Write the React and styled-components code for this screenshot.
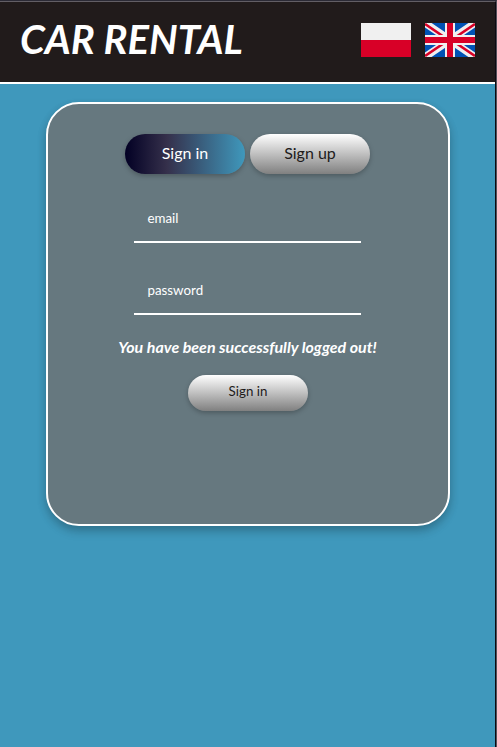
import React from "react";
import styled, { createGlobalStyle } from "styled-components";

const GlobalStyle = createGlobalStyle`
  *, *::before, *::after { box-sizing: border-box; }
  body { margin: 0; background: #3f98bc; font-family: Lato, sans-serif; }
  button, input { font-family: inherit; }
`;

const Page = styled.div`
  display: flex;
  flex-direction: column;
  width: 497px;
  height: 747px;
  overflow: hidden;
  background: #3f98bc;
  border-top: 1px solid #2b2a35;
  border-right: 1px solid #55505a;
`;

const Frame = styled.div`
  flex: 1;
  border-top: 1px solid #625e65;
  border-right: 1px solid #0c0a12;
`;

const Header = styled.header`
  display: flex;
  align-items: center;
  justify-content: space-between;
  height: 82px;
  padding: 0 20px 4px;
  background: #211b1b;
  border-bottom: 2px solid #fff;
`;

const Title = styled.h1`
  margin: 0 0 2px;
  color: #fff;
  font-size: 40px;
  line-height: 48px;
  font-style: italic;
  font-weight: 700;
  white-space: nowrap;
`;

const Flags = styled.div`
  display: flex;
  gap: 14px;
`;

const Flag = styled.svg`
  display: block;
  width: 50px;
  height: 34px;
`;

const Card = styled.main`
  display: flex;
  flex-direction: column;
  align-items: center;
  width: 404px;
  height: 424px;
  margin: 18px 0 0 46px;
  padding-top: 30px;
  background: #66787f;
  border: 2px solid #fff;
  border-radius: 33px;
  box-shadow: 0 4px 8px rgba(0, 0, 0, 0.2), 0 6px 12px rgba(0, 0, 0, 0.08);
`;

const Tabs = styled.div`
  display: flex;
  gap: 5px;
  margin-right: 1px;
`;

const PillButton = styled.button`
  width: 120px;
  height: ${(p) => (p.$small ? 36 : 40)}px;
  padding: ${(p) => (p.$small ? "0 1px 5px" : "0 0 3px")};
  border: 0;
  border-radius: 20px;
  color: ${(p) => (p.$active ? "#fff" : "#211b1b")};
  background: ${(p) =>
    p.$active
      ? "linear-gradient(90deg, #020024 0%, #35304b 35%, #3f98bc 100%)"
      : "linear-gradient(180deg, #fff 0%, #808080 100%)"};
  font-size: ${(p) => (p.$small ? 13.333 : 16)}px;
  box-shadow: 0 2px 5px rgba(0, 0, 0, 0.25);
`;

const Form = styled.form`
  display: flex;
  flex-direction: column;
  align-items: center;
  margin-top: 23px;
`;

const Field = styled.input`
  width: 227px;
  height: 46px;
  margin-bottom: 26px;
  padding: 0 13px 3px;
  border: 0;
  border-bottom: 2px solid #fff;
  background: transparent;
  color: #fff;
  font-size: 13.333px;
  outline: 0;

  &::placeholder { color: #fff; opacity: 1; }
`;

const Message = styled.p`
  margin: -4px 1px 19px 0;
  color: #fff;
  font-size: 16px;
  line-height: 19px;
  font-style: italic;
  font-weight: 700;
  white-space: nowrap;
`;

function PolishFlag() {
  return (
    <Flag viewBox="0 0 50 34" aria-label="Polski">
      <path fill="#f0f0f0" d="M0 0h50v17H0z" />
      <path fill="#d80027" d="M0 17h50v17H0z" />
    </Flag>
  );
}

function BritishFlag() {
  return (
    <Flag viewBox="0 0 50 34" aria-label="English">
      <path fill="#0052b4" d="M0 0h50v34H0z" />
      <path stroke="#f0f0f0" strokeWidth="7.4" d="M0 0l50 34M50 0L0 34" />
      <path stroke="#d80027" strokeWidth="2.6" d="M0 1l25 17M50 1L25 18M0 33l25-17M50 33L25 16" />
      <path fill="#f0f0f0" d="M20 0h10v12h20v10H30v12H20V22H0V12h20z" />
      <path fill="#d80027" d="M22 0h6v14h22v6H28v14h-6V20H0v-6h22z" />
    </Flag>
  );
}

export default function App() {
  return (
    <>
      <GlobalStyle />
      <Page>
        <Frame>
          <Header>
            <Title>CAR RENTAL</Title>
            <Flags>
              <PolishFlag />
              <BritishFlag />
            </Flags>
          </Header>
          <Card>
            <Tabs>
              <PillButton type="button" $active>Sign in</PillButton>
              <PillButton type="button">Sign up</PillButton>
            </Tabs>
            <Form>
              <Field type="text" placeholder="email" />
              <Field type="password" placeholder="password" />
              <Message>You have been successfully logged out!</Message>
              <PillButton type="button" $small>Sign in</PillButton>
            </Form>
          </Card>
        </Frame>
      </Page>
    </>
  );
}
